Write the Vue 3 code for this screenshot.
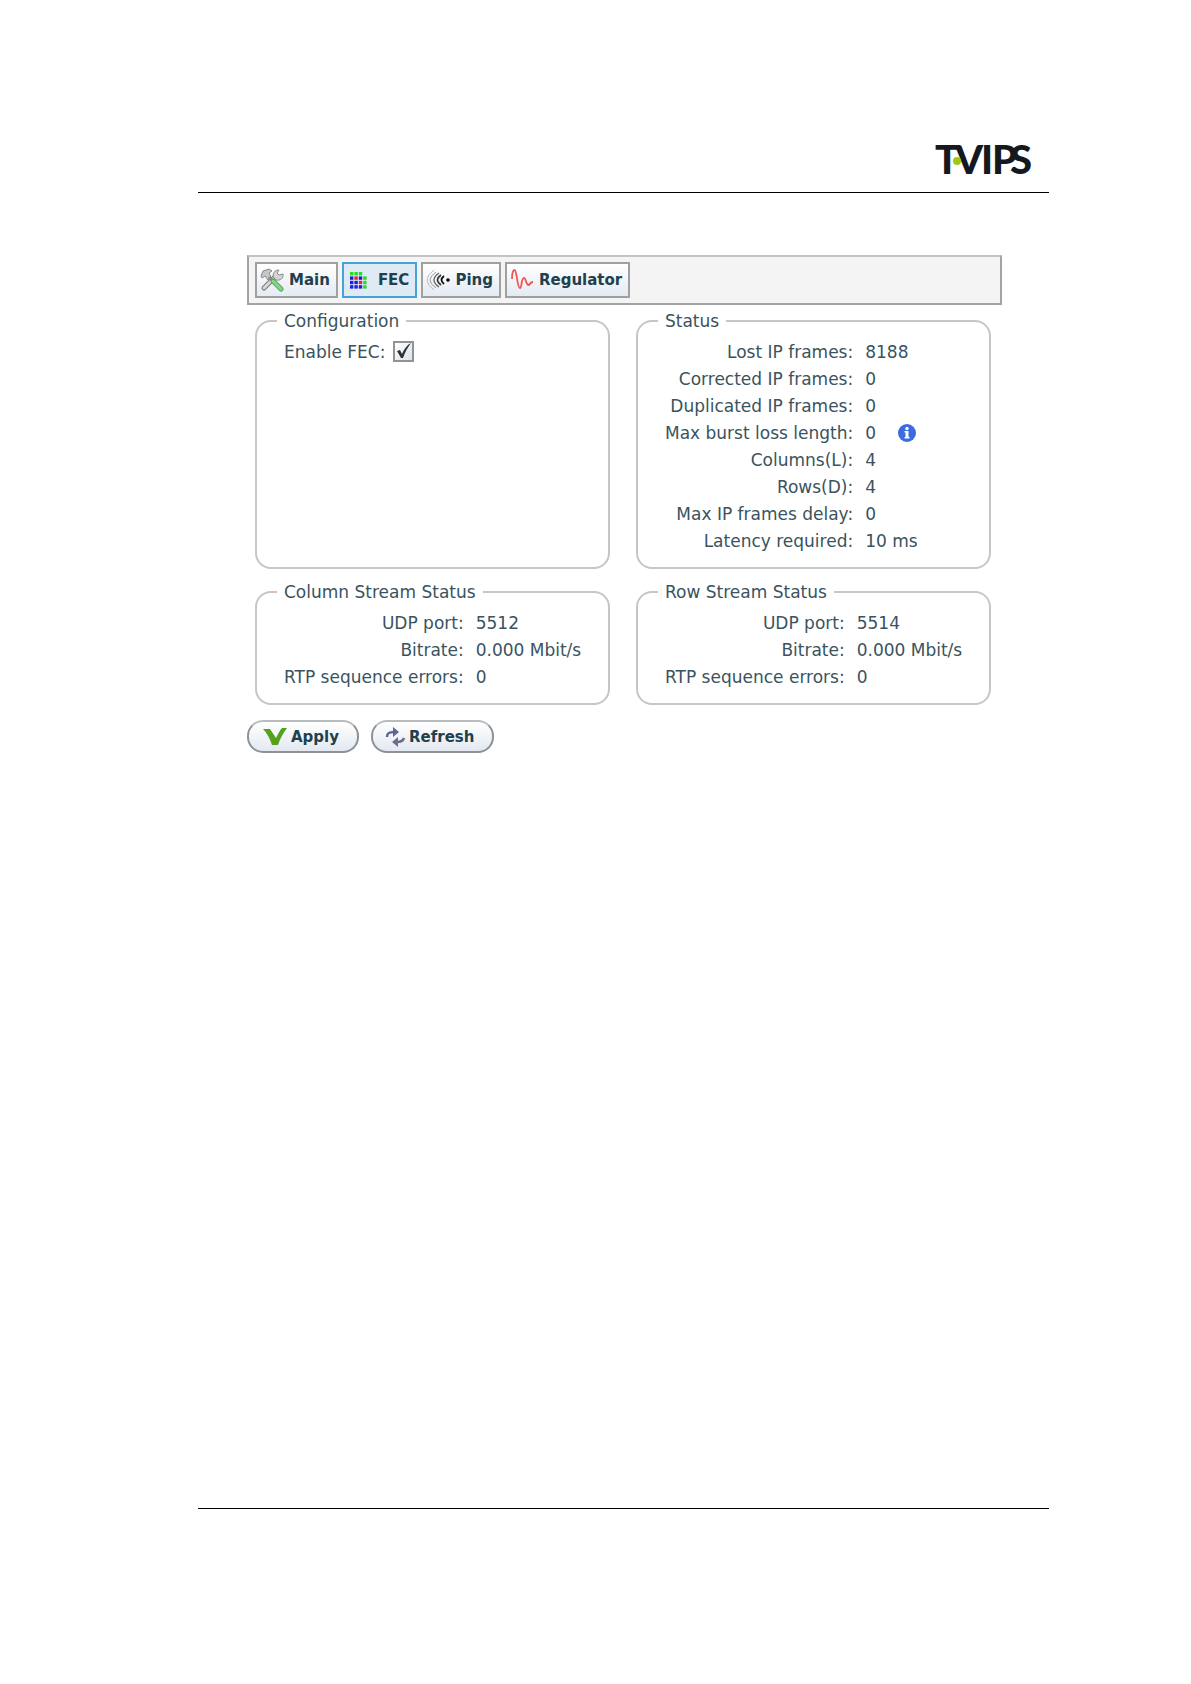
<script setup>
import { ref } from 'vue'

const tabs = ['Main', 'FEC', 'Ping', 'Regulator']
const activeTab = ref('FEC')
const fecEnabled = ref(true)

const status = [
  { label: 'Lost IP frames:', value: '8188' },
  { label: 'Corrected IP frames:', value: '0' },
  { label: 'Duplicated IP frames:', value: '0' },
  { label: 'Max burst loss length:', value: '0', info: true },
  { label: 'Columns(L):', value: '4' },
  { label: 'Rows(D):', value: '4' },
  { label: 'Max IP frames delay:', value: '0' },
  { label: 'Latency required:', value: '10 ms' },
]

const streams = [
  {
    title: 'Column Stream Status',
    rows: [
      { label: 'UDP port:', value: '5512' },
      { label: 'Bitrate:', value: '0.000 Mbit/s' },
      { label: 'RTP sequence errors:', value: '0' },
    ],
  },
  {
    title: 'Row Stream Status',
    rows: [
      { label: 'UDP port:', value: '5514' },
      { label: 'Bitrate:', value: '0.000 Mbit/s' },
      { label: 'RTP sequence errors:', value: '0' },
    ],
  },
]

const fecDots = ['ggg.', 'brbg', 'bbrg', 'bbbg']
const dotColors = { g: '#22e022', b: '#1c1cdc', r: '#e8252f' }
</script>

<template>
  <div class="page">
    <header class="page-header">
      <svg class="logo" viewBox="0 0 100 34" role="img" aria-label="T-VIPS">
        <text class="logo-text" y="32" x="0 20 46 57 75">TVIPS</text>
        <circle cx="22" cy="19" r="4" fill="#a3c614" />
      </svg>
    </header>

    <main class="panel">
      <nav class="toolbar">
        <button
          v-for="tab in tabs"
          :key="tab"
          type="button"
          class="tab"
          :class="{ active: tab === activeTab }"
          @click="activeTab = tab"
        >
          <svg v-if="tab === 'Main'" class="tab-icon" viewBox="0 0 24 24">
            <path d="M4 20 L15 9" stroke="#777" stroke-width="5" stroke-linecap="round" />
            <path d="M4 20 L15 9" stroke="#d8d8d8" stroke-width="3" stroke-linecap="round" />
            <path d="M14 10 C12 6 14 2 19 2 L17 5 L19 7 L23 6 C24 10 20 13 16 12 Z" fill="#d4d4d4" stroke="#8a8a8a" />
            <path d="M1 8 L3 3 L9 1 L12 3 L9 5 L11 9 L8 12 L5 8 L2 10 Z" fill="#c6c6c6" stroke="#8a8a8a" />
            <path d="M9 9 L14 14" stroke="#8a8a8a" stroke-width="3" />
            <path d="M13 13 L21 21" stroke="#55a65a" stroke-width="5" stroke-linecap="round" />
            <path d="M13 13 L21 21" stroke="#84d888" stroke-width="3" stroke-linecap="round" />
          </svg>
          <svg v-else-if="tab === 'FEC'" class="tab-icon" viewBox="0 0 24 24">
            <template v-for="(line, r) in fecDots" :key="r">
              <template v-for="(dot, c) in line" :key="c">
                <rect
                  v-if="dot !== '.'"
                  :x="3 + c * 4.4"
                  :y="4 + r * 4.4"
                  width="3.4"
                  height="3.4"
                  :fill="dotColors[dot]"
                />
              </template>
            </template>
          </svg>
          <svg v-else-if="tab === 'Ping'" class="tab-icon" viewBox="0 0 24 24" fill="none">
            <path d="M8 2 Q-6 12 8 22" stroke="#bbb" />
            <path d="M10 4 Q-2 12 10 20" stroke="#999" />
            <path d="M13 5 Q3 12 13 19" stroke="#666" stroke-width="1.3" />
            <path d="M15 7 Q8 12 15 17" stroke="#333" stroke-width="1.6" />
            <path d="M18 8 Q13 12 18 16" stroke="#111" stroke-width="1.8" />
            <circle cx="22" cy="12" r="1.8" fill="#000" />
          </svg>
          <svg v-else class="tab-icon" viewBox="0 0 24 24" fill="none">
            <path
              d="M2 11 C2 5 3 2 4.5 2 C7 2 7 20 10 20 C12 20 11 10 14 10 C16 10 16 17 18.5 17 C20 17 20 14 23 14"
              stroke="#f25555"
              stroke-width="1.8"
            />
          </svg>
          <span>{{ tab }}</span>
        </button>
      </nav>

      <div class="groups">
        <fieldset class="group">
          <legend>Configuration</legend>
          <div class="check-row">
            <label for="enable-fec">Enable FEC:</label>
            <span class="check">
              <input id="enable-fec" v-model="fecEnabled" type="checkbox" />
              <svg v-if="fecEnabled" class="check-mark" viewBox="0 0 21 21">
                <path d="M4 10 L7 9 L9 13 C11 8 14 4 18 2 C15 6 12 11 10 17 L8 17 Z" fill="#2c3338" />
              </svg>
            </span>
          </div>
        </fieldset>

        <fieldset class="group">
          <legend>Status</legend>
          <table class="wide-labels">
            <tbody>
              <tr v-for="row in status" :key="row.label">
                <th scope="row">{{ row.label }}</th>
                <td>
                  <span class="cell">
                    {{ row.value }}
                    <svg v-if="row.info" class="info" viewBox="0 0 18 18" role="img" aria-label="Information">
                      <circle cx="9" cy="9" r="9" fill="#3a6be0" />
                      <circle cx="9" cy="4.5" r="1.7" fill="#fff" />
                      <path d="M6.500 7 H10.500 V13 H11.500 V14.500 H6.500 V13 H7.500 V8.500 H6.500 Z" fill="#fff" />
                    </svg>
                  </span>
                </td>
              </tr>
            </tbody>
          </table>
        </fieldset>

        <fieldset v-for="stream in streams" :key="stream.title" class="group">
          <legend>{{ stream.title }}</legend>
          <table>
            <tbody>
              <tr v-for="row in stream.rows" :key="row.label">
                <th scope="row">{{ row.label }}</th>
                <td>{{ row.value }}</td>
              </tr>
            </tbody>
          </table>
        </fieldset>
      </div>

      <div class="actions">
        <button type="button" class="action">
          <svg class="apply-icon" viewBox="0 0 24 18">
            <path d="M0 1 H7 L13 10 C15 6 17 2 19 0 H24 C20 5 17 11 15 17 H9 C7 11 4 5 0 1 Z" fill="#55a01c" />
          </svg>
          <span>Apply</span>
        </button>
        <button type="button" class="action refresh">
          <svg class="refresh-icon" viewBox="0 0 20 20" fill="none">
            <path d="M2 10 C2 6 4 5 9 5" stroke="#5d6596" stroke-width="2.5" />
            <path d="M8 0 L14 5 L8 10 Z" fill="#5d6596" />
            <path d="M19 11 C18 14 16 15 12 15" stroke="#6a708c" stroke-width="2.5" />
            <path d="M13 10 L7 15 L13 20 Z" fill="#6a708c" />
          </svg>
          <span>Refresh</span>
        </button>
      </div>
    </main>

    <footer class="page-footer"></footer>
  </div>
</template>

<style>
body {
  margin: 0;
  background: #fff;
}
</style>

<style scoped>
.page {
  box-sizing: border-box;
  min-height: 100vh;
  padding: 142px 142px 175px 198px;
  display: flex;
  flex-direction: column;
  font-family: "DejaVu Sans", Verdana, sans-serif;
  font-size: 17px;
  line-height: 20px;
  color: #3a535e;
}

.page-header {
  display: flex;
  justify-content: flex-end;
  padding: 0 14px 16px 0;
  border-bottom: 1px solid #000;
}

.logo {
  width: 100px;
  height: 34px;
  overflow: visible;
}

.logo-text {
  font-family: Lato, sans-serif;
  font-weight: 900;
  font-size: 40px;
  fill: #14191d;
}

.page-footer {
  margin-top: auto;
  border-top: 1px solid #000;
}

.panel {
  padding: 62px 47px 0 49px;
}

.toolbar {
  display: flex;
  gap: 4px;
  padding: 5px 6px;
  border: 2px solid #a3a3a3;
  border-top-color: #c4c4c4;
  background: #f4f4f4;
}

button {
  display: flex;
  align-items: center;
  box-sizing: border-box;
  margin: 0;
  font: inherit;
  font-size: 15px;
  font-weight: bold;
  color: #21404c;
  cursor: pointer;
}

.tab {
  height: 36px;
  gap: 5px;
  padding: 0 6px 0 3px;
  border: 2px solid #a0a0a0;
  background: linear-gradient(#fff, #e4ebf3);
}

.tab.active {
  gap: 7px;
  border-color: #46a2da;
  background: #dfeaf5;
}

.tab-icon {
  width: 24px;
  height: 24px;
}

.groups {
  display: grid;
  grid-template-columns: 1fr 1fr;
  gap: 13px 26px;
  padding: 6px 11px 0 8px;
}

.group {
  min-width: 0;
  margin: 0;
  padding: 7px 27px 13px;
  border: 2px solid #c6c6c6;
  border-radius: 16px;
}

legend {
  margin-left: -7px;
  padding: 0 7px;
}

.check-row {
  display: flex;
  align-items: center;
  gap: 8px;
  height: 27px;
}

.check {
  position: relative;
  display: flex;
}

.check input {
  appearance: none;
  box-sizing: border-box;
  width: 21px;
  height: 21px;
  margin: 0;
  border: 2px solid #8f9396;
  background: linear-gradient(135deg, #fff, #dde3e8);
}

.check-mark {
  position: absolute;
  inset: 0;
  pointer-events: none;
}

table {
  border-collapse: collapse;
}

th,
td {
  height: 27px;
  padding: 0;
  white-space: nowrap;
}

th {
  min-width: 178px;
  padding-right: 12px;
  font-weight: normal;
  text-align: right;
}

.wide-labels th {
  min-width: 187px;
}

.cell {
  display: flex;
  align-items: center;
  gap: 22px;
}

.info {
  width: 18px;
  height: 18px;
}

.actions {
  display: flex;
  gap: 12px;
  padding-top: 15px;
}

.action {
  height: 33px;
  padding: 0 18px 0 14px;
  gap: 4px;
  border: 2px solid #8d9296;
  border-top-color: #b9bdc0;
  border-radius: 16px;
  background: linear-gradient(#fff, #e3e9f1);
}

.action.refresh {
  padding-left: 12px;
}

.apply-icon {
  width: 24px;
  height: 18px;
}

.refresh-icon {
  width: 20px;
  height: 20px;
}
</style>
